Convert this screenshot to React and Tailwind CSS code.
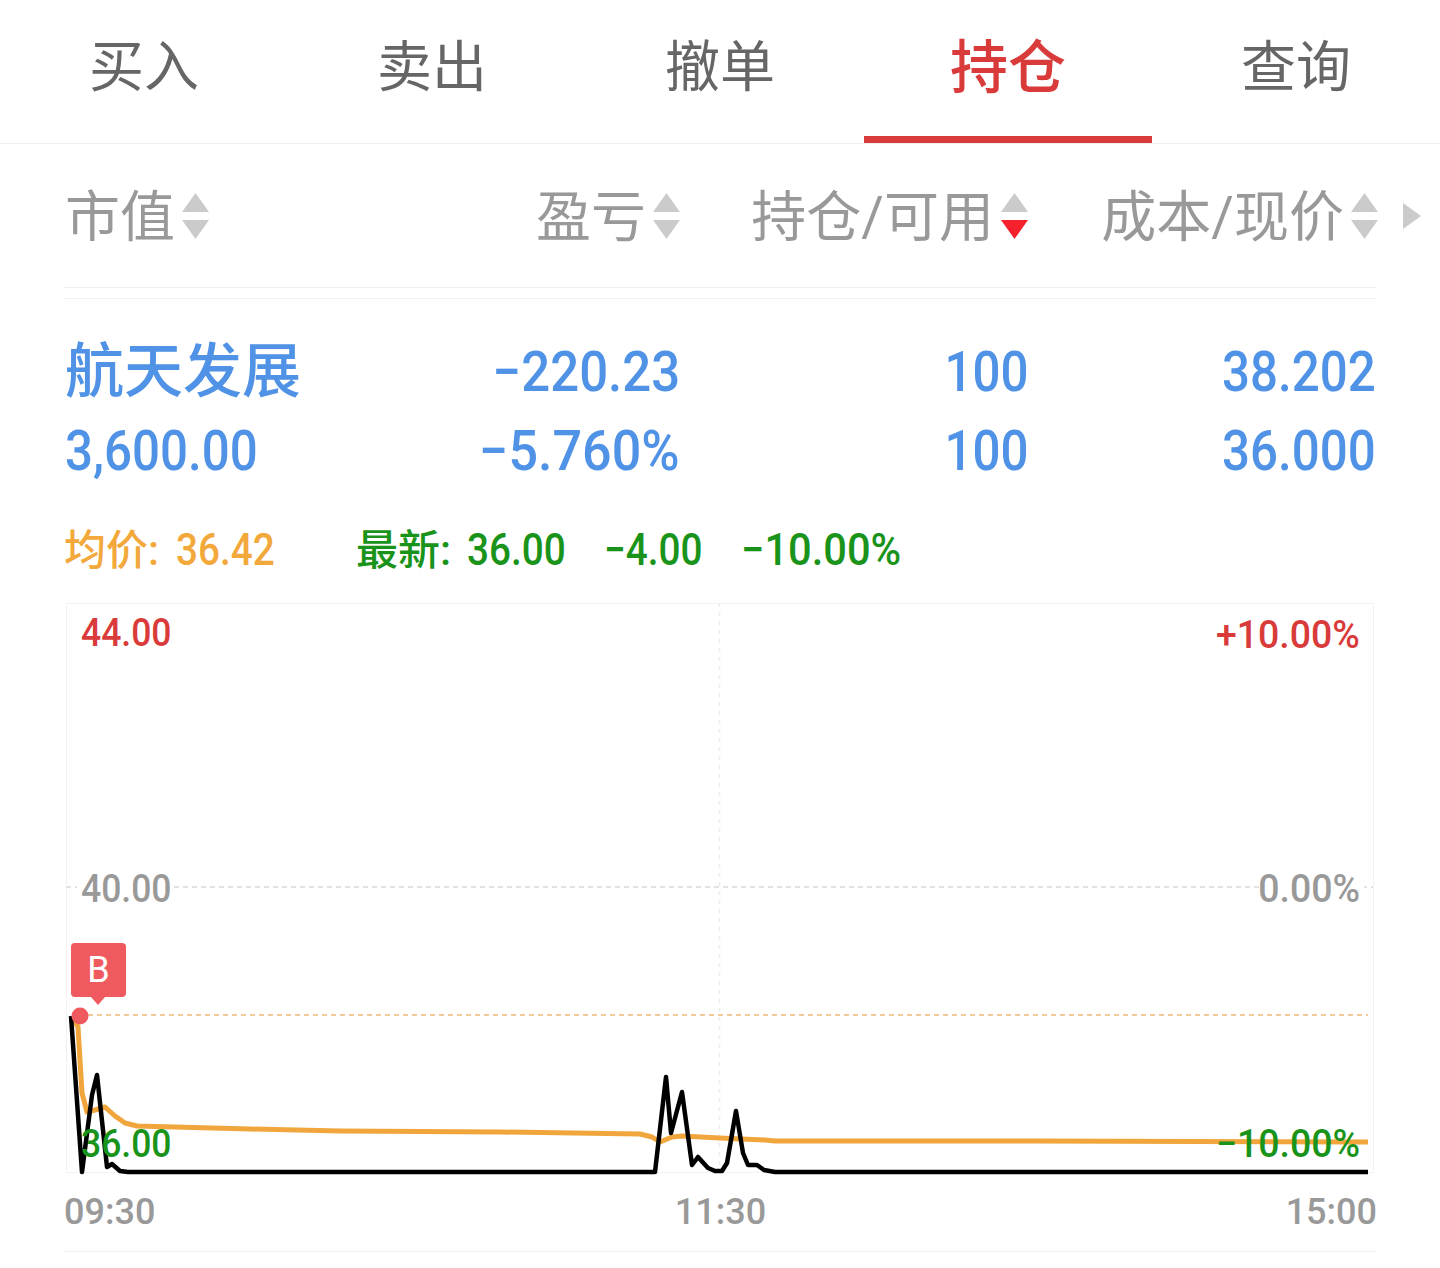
import React from 'react';

const TABS = [
  { label: '买入' },
  { label: '卖出' },
  { label: '撤单' },
  { label: '持仓', active: true },
  { label: '查询' },
];

const BLACK_LINE =
  '71,1016 82,1172 92,1095 97,1075 107,1167 112,1164 120,1171 128,1172 655,1172 666,1077 671,1133 682,1092 692,1165 698,1157 708,1168 715,1171 722,1171 727,1163 736,1111 743,1153 748,1165 757,1165 764,1170 775,1172 1368,1172';

const AVG_LINE =
  '72,1016 78,1027 82,1093 87,1112 95,1110 105,1107 115,1116 125,1123 137,1126 250,1129 340,1131 500,1132 640,1134 652,1137 660,1142 672,1137 682,1136 720,1138 765,1140 775,1141 1040,1141 1368,1142';

function SortArrows({ down }) {
  return (
    <svg width="27" height="46" viewBox="0 0 27 46" className="shrink-0">
      <path d="M13.5 0L27 19H0z" fill="#cbcbcb" />
      <path d="M0 27h27L13.5 46z" fill={down ? '#f5222d' : '#cbcbcb'} />
    </svg>
  );
}

function HeaderCell({ children, down, className }) {
  return (
    <div className={`flex items-center gap-[7px] ${className}`}>
      <span className="pt-[4px]">{children}</span>
      <SortArrows down={down} />
    </div>
  );
}

// digits in the reference are narrower than Roboto, squeeze them a bit
function Cell({ children, left, squeeze = 'scale-x-[0.88]' }) {
  return (
    <div className={left ? 'text-left pl-[1px]' : 'text-right'}>
      <span className={`inline-block font-medium text-[56px] ${squeeze} ${left ? 'origin-left' : 'origin-right'}`}>
        {children}
      </span>
    </div>
  );
}

function Digits({ children, wide }) {
  return (
    <span className={`inline-block origin-left font-medium text-[45px] ${wide ? 'scale-x-[0.925]' : 'scale-x-[0.86]'}`}>
      {children}
    </span>
  );
}

function ChartLabel({ children, right, className }) {
  return (
    <div
      className={`absolute font-medium text-[39px] ${
        right ? 'origin-right scale-x-[0.96]' : 'origin-left scale-x-[0.91]'
      } ${className}`}
    >
      {children}
    </div>
  );
}

export default function App() {
  return (
    <div className="w-[1440px] h-[1268px] bg-white overflow-hidden font-['Roboto','Noto_Sans_CJK_SC',sans-serif]">
      {/* Tabs */}
      <div className="grid grid-cols-5 h-[144px] border-b border-[#f0f0f0]">
        {TABS.map((t) => (
          <div
            key={t.label}
            className={`flex items-center justify-center leading-none pb-[8px] ${
              t.active
                ? 'text-[58px] font-medium text-[#d93a3a] border-b-[7px] border-[#d93a3a] pt-[7px]'
                : 'text-[55px] text-[#666666]'
            }`}
          >
            {t.label}
          </div>
        ))}
      </div>

      <div className="relative mx-[64px]">
        {/* Table header */}
        <div className="grid grid-cols-[308px_308px_348px_348px] h-[144px] items-center border-b border-[#f0f0f0] text-[55px] leading-none text-[#999999]">
          <HeaderCell className="pl-[1px]">市值</HeaderCell>
          <HeaderCell className="justify-end">盈亏</HeaderCell>
          <HeaderCell className="justify-end" down>持仓/可用</HeaderCell>
          <HeaderCell className="justify-end -mr-[2px]">成本/现价</HeaderCell>
        </div>
        <svg width="18" height="26" viewBox="0 0 18 26" className="absolute left-[1339px] top-[59px]">
          <path d="M0 0l18 13L0 26z" fill="#cbcbcb" />
        </svg>

        {/* Position row */}
        <div className="mt-[10px] border-t border-[#f0f0f0] pt-[33px] text-[#4f92e6]">
          <div className="grid grid-cols-[308px_308px_348px_348px] items-center h-[79px] leading-none">
            <div className="pl-[1px] text-[59px] font-medium">航天发展</div>
            <Cell squeeze="scale-x-[0.91]">−220.23</Cell>
            <Cell>100</Cell>
            <Cell>38.202</Cell>
          </div>
          <div className="grid grid-cols-[308px_308px_348px_348px] items-center h-[79px] leading-none">
            <Cell left>3,600.00</Cell>
            <Cell squeeze="scale-x-[0.93]">−5.760%</Cell>
            <Cell>100</Cell>
            <Cell>36.000</Cell>
          </div>
        </div>

        {/* Quote summary */}
        <div className="flex items-center h-[60px] mt-[29px] text-[42px] leading-none font-medium">
          <span className="text-[#f3a83c] w-[292px]">均价: <span className="ml-[6px]"><Digits>36.42</Digits></span></span>
          <span className="text-[#1a931a] w-[248px]">最新: <span className="ml-[5px]"><Digits>36.00</Digits></span></span>
          <span className="text-[#1a931a] w-[137px]"><Digits>−4.00</Digits></span>
          <span className="text-[#1a931a]"><Digits wide>−10.00%</Digits></span>
        </div>

        {/* Chart */}
        <div className="relative mt-[24px] ml-[2px] w-[1308px] h-[570px] border border-[#f2f2f2] leading-none">
          <svg
            viewBox="66 603 1308 570"
            className="absolute -left-px -top-px w-[1308px] h-[570px] overflow-visible"
            fill="none"
          >
            <line x1="719.5" y1="603" x2="719.5" y2="1172" stroke="#ececec" strokeWidth="1.5" strokeDasharray="4 5" />
            <line x1="66" y1="887" x2="1373" y2="887" stroke="#d9d9d9" strokeWidth="1.5" strokeDasharray="5 4" />
            <line x1="88" y1="1015" x2="1368" y2="1015" stroke="#eeb878" strokeWidth="1.5" strokeDasharray="5 4" />
            <polyline points={AVG_LINE} stroke="#f0a63c" strokeWidth="5" strokeLinejoin="round" />
            <polyline points={BLACK_LINE} stroke="#000000" strokeWidth="4.5" strokeLinejoin="round" />
            <circle cx="80" cy="1016" r="8.5" fill="#ef5a5f" />
          </svg>

          <ChartLabel className="left-[14px] top-[10px] text-[#d93a3a]">44.00</ChartLabel>
          <ChartLabel right className="right-[13px] top-[12px] text-[#d93a3a]">+10.00%</ChartLabel>
          <div className="absolute left-[10px] top-[267px] w-[96px] h-[36px] bg-white" />
          <div className="absolute right-[9px] top-[267px] w-[105px] h-[36px] bg-white" />
          <ChartLabel className="left-[14px] top-[266px] text-[#999999]">40.00</ChartLabel>
          <ChartLabel right className="right-[13px] top-[266px] text-[#999999]">0.00%</ChartLabel>
          <ChartLabel className="left-[14px] top-[521px] text-[#1a931a]">36.00</ChartLabel>
          <ChartLabel right className="right-[13px] top-[521px] text-[#1a931a]">−10.00%</ChartLabel>

          {/* Buy marker */}
          <div className="absolute left-[4px] top-[339px] w-[55px] h-[54px] rounded-[4px] bg-[#ef5a5f] flex items-center justify-center text-white text-[36px]">
            B
            <div className="absolute left-[20px] -bottom-[8px] w-0 h-0 border-x-[7px] border-x-transparent border-t-[8px] border-t-[#ef5a5f]" />
          </div>
        </div>

        {/* Time axis */}
        <div className="flex justify-between items-center h-[79px] -mr-px border-b border-[#f0f0f0] font-medium text-[36px] leading-none text-[#999999]">
          <span>09:30</span>
          <span>11:30</span>
          <span>15:00</span>
        </div>
      </div>
    </div>
  );
}
